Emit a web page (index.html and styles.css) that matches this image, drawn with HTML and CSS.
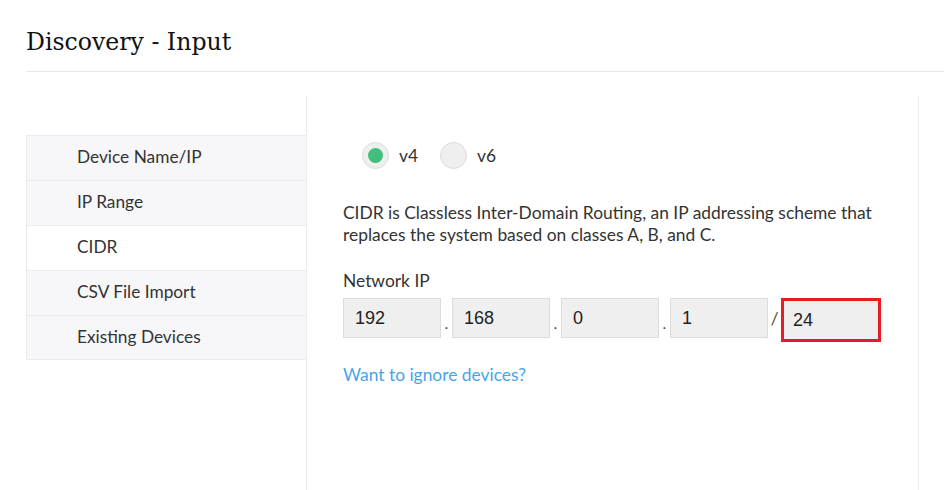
FILE: index.html
```html
<!DOCTYPE html>
<html>
<head>
<meta charset="utf-8">
<link rel="stylesheet" href="styles.css">
</head>
<body>
<div class="page">
  <div class="header"><h1 class="title">Discovery - Input</h1></div>
  <div class="main">
    <div class="sidebar">
      <ul class="menu">
        <li class="menu-item">Device Name/IP</li>
        <li class="menu-item">IP Range</li>
        <li class="menu-item active">CIDR</li>
        <li class="menu-item">CSV File Import</li>
        <li class="menu-item">Existing Devices</li>
      </ul>
    </div>
    <div class="content">
      <div class="radios">
        <label class="radio"><span class="radio-circle checked"><span class="radio-dot"></span></span><span class="radio-label">v4</span></label>
        <label class="radio"><span class="radio-circle"></span><span class="radio-label">v6</span></label>
      </div>
      <p class="desc">CIDR is Classless Inter-Domain Routing, an IP addressing scheme that replaces the system based on classes A, B, and C.</p>
      <div class="field-label">Network IP</div>
      <div class="ip-row">
        <div class="ip-box">192</div>
        <span class="sep">.</span>
        <div class="ip-box">168</div>
        <span class="sep">.</span>
        <div class="ip-box">0</div>
        <span class="sep">.</span>
        <div class="ip-box">1</div>
        <span class="sep slash">/</span>
        <div class="ip-box highlight">24</div>
      </div>
      <a class="link" href="#">Want to ignore devices?</a>
    </div>
  </div>
</div>
</body>
</html>
```

FILE: styles.css
```css
html, body {
  margin: 0;
  padding: 0;
  background: #ffffff;
}
body {
  font-family: Lato, "Open Sans", sans-serif;
  color: #333333;
  height: 490px;
  overflow: hidden;
}
.page {
  padding-left: 26px;
  height: 490px;
  display: flex;
  flex-direction: column;
}
.header {
  height: 72px;
  border-bottom: 1px solid #e8e8e8;
  box-sizing: border-box;
}
.title {
  margin: 0;
  padding-top: 27px;
  font-family: "DejaVu Serif", serif;
  font-weight: normal;
  font-size: 23.6px;
  line-height: 30px;
  color: #111111;
}
.main {
  display: flex;
  flex: 1;
  margin-top: 24px;
  margin-right: 25px;
}
.sidebar {
  width: 281px;
  border-right: 1px solid #ededed;
  padding-top: 39px;
  box-sizing: border-box;
}
.menu {
  list-style: none;
  margin: 0;
  padding: 0;
}
.menu-item {
  height: 45px;
  box-sizing: border-box;
  border-top: 1px solid #ebebeb;
  border-left: 1px solid #ebebeb;
  background: #f7f7f9;
  padding-left: 50px;
  padding-bottom: 3px;
  display: flex;
  align-items: center;
  font-size: 17.3px;
  color: #333333;
}
.menu-item:last-child {
  border-bottom: 1px solid #ebebeb;
}
.menu-item.active {
  background: #ffffff;
}
.content {
  flex: 1;
  border-right: 1px solid #ededed;
  padding-left: 36px;
  padding-top: 46px;
}
.radios {
  display: flex;
  align-items: center;
  padding-left: 19px;
  gap: 22px;
}
.radio {
  display: flex;
  align-items: center;
  gap: 10px;
}
.radio-circle {
  width: 27px;
  height: 27px;
  box-sizing: border-box;
  border-radius: 50%;
  background: #efefef;
  border: 1px solid #dcdcdc;
  display: flex;
  align-items: center;
  justify-content: center;
}
.radio-dot {
  width: 15px;
  height: 15px;
  border-radius: 50%;
  background: #43bf7c;
}
.radio-label {
  font-size: 17.4px;
  color: #333333;
}
.desc {
  margin: 33px 0 0 0;
  max-width: 560px;
  font-size: 17.4px;
  line-height: 22px;
  color: #333333;
}
.field-label {
  margin-top: 24px;
  font-size: 17.4px;
  line-height: 22px;
}
.ip-row {
  display: flex;
  align-items: center;
  margin-top: 6px;
  height: 40px;
}
.ip-box {
  width: 98px;
  height: 40px;
  box-sizing: border-box;
  background: #efefef;
  border: 1px solid #dcdcdc;
  padding-left: 11px;
  display: flex;
  align-items: center;
  font-family: "Liberation Sans", Arial, sans-serif;
  font-size: 18px;
  color: #222222;
}
.sep {
  width: 11px;
  text-align: center;
  font-size: 16px;
  color: #555555;
  padding-top: 8px;
}
.sep.slash {
  width: 13px;
  padding-top: 0;
  font-size: 18px;
}
.ip-box.highlight {
  width: 100px;
  height: 44px;
  border: 3px solid #e81c24;
  padding-left: 9px;
  margin-top: 4px;
}
.link {
  display: block;
  margin-top: 26px;
  font-size: 17.4px;
  line-height: 22px;
  color: #4aa3ea;
  text-decoration: none;
}
```
